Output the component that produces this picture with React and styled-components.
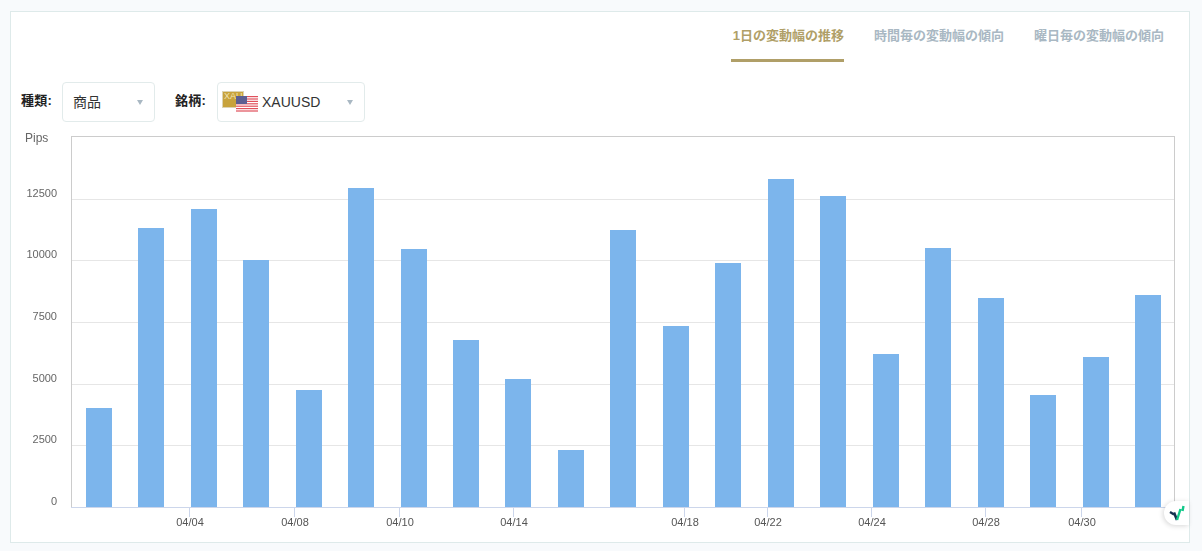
import React from "react";
import styled, { createGlobalStyle } from "styled-components";

const GlobalStyle = createGlobalStyle`
  html, body {
    margin: 0;
    padding: 0;
    background: #f8fafc;
  }
  body {
    font-family: "Liberation Sans", "Noto Sans CJK JP", sans-serif;
  }
`;

const Page = styled.div`
  width: 1202px;
  height: 551px;
  padding: 11px 0 0 10px;
  box-sizing: border-box;
  overflow: hidden;
`;

const Card = styled.div`
  position: relative;
  width: 1180px;
  height: 532px;
  box-sizing: border-box;
  background: #fff;
  border: 1px solid #deeaea;
`;

const Tabs = styled.div`
  display: flex;
  justify-content: flex-end;
  gap: 30px;
  padding-right: 25px;
  height: 50px;
`;

const Tab = styled.div`
  box-sizing: border-box;
  height: 50px;
  padding-top: 14px;
  padding-left: ${(p) => (p.$active ? 2 : 0)}px;
  font-size: 13px;
  line-height: 19px;
  font-weight: 700;
  white-space: nowrap;
  color: ${(p) => (p.$active ? "#b09f68" : "#a9b8c3")};
  border-bottom: 3px solid ${(p) => (p.$active ? "#b09f68" : "transparent")};
`;

const Filters = styled.div`
  display: flex;
  align-items: center;
  height: 40px;
  margin-top: 20px;
  padding-left: 10px;
`;

const FilterLabel = styled.span`
  width: ${(p) => p.$width}px;
  flex: none;
  margin-top: -5px;
  margin-left: ${(p) => p.$offset || 0}px;
  font-size: 13px;
  font-weight: 700;
  letter-spacing: 0.3px;
  color: #222;
  white-space: nowrap;
`;

const Select = styled.div`
  display: flex;
  align-items: center;
  box-sizing: border-box;
  width: ${(p) => p.$width}px;
  height: 40px;
  padding: 0 11px 0 ${(p) => p.$left}px;
  background: #fff;
  border: 1px solid #e2ebeb;
  border-radius: 4px;
  font-size: 14px;
  line-height: 20px;
  color: #333;
`;

const SelectText = styled.span`
  flex: 1;
  margin-top: -1px;
  white-space: nowrap;
`;

const Caret = styled.span`
  width: 0;
  height: 0;
  margin-top: 1px;
  border-left: 3.5px solid transparent;
  border-right: 3.5px solid transparent;
  border-top: 5px solid #a9b8c3;
`;

const PairIcon = styled.svg`
  flex: none;
  width: 36px;
  height: 22px;
  margin-right: 4px;
`;

const ChartSvg = styled.svg`
  display: block;
  width: 1178px;
  height: 414px;
  margin-top: 6px;
  will-change: transform;
`;

const AxisText = styled.text`
  font-family: "Liberation Sans", sans-serif;
  font-size: ${(p) => p.$size || 11}px;
  fill: ${(p) => p.$color || "#666"};
`;

const BrandBadge = styled.div`
  position: absolute;
  right: 0;
  bottom: 17px;
  width: 25px;
  height: 24px;
  background: #fff;
  border-radius: 12px 0 0 12px;
  box-shadow: -1px 1px 5px rgba(0, 0, 0, 0.16);
`;

const bars = [
  { x: 86, top: 408 },
  { x: 138, top: 228 },
  { x: 191, top: 209 },
  { x: 243, top: 260 },
  { x: 296, top: 390 },
  { x: 348, top: 188 },
  { x: 401, top: 249 },
  { x: 453, top: 340 },
  { x: 505, top: 379 },
  { x: 558, top: 450 },
  { x: 610, top: 230 },
  { x: 663, top: 326 },
  { x: 715, top: 263 },
  { x: 768, top: 179 },
  { x: 820, top: 196 },
  { x: 873, top: 354 },
  { x: 925, top: 248 },
  { x: 978, top: 298 },
  { x: 1030, top: 395 },
  { x: 1083, top: 357 },
  { x: 1135, top: 295 },
];

const yTicks = [
  { label: "12500", y: 199.5 },
  { label: "10000", y: 260.5 },
  { label: "7500", y: 322.5 },
  { label: "5000", y: 384.5 },
  { label: "2500", y: 445.5 },
];

const xTicks = [
  { label: "04/04", x: 189.5 },
  { label: "04/08", x: 294.5 },
  { label: "04/10", x: 399.5 },
  { label: "04/14", x: 513.5 },
  { label: "04/18", x: 684.5 },
  { label: "04/22", x: 767.5 },
  { label: "04/24", x: 871.5 },
  { label: "04/28", x: 985.5 },
  { label: "04/30", x: 1081.5 },
];

function XauUsdIcon() {
  const stripes = [0, 2, 4, 6, 8, 10, 12];
  return (
    <PairIcon viewBox="0 0 36 22">
      <rect x="0.5" y="0.5" width="21" height="16" fill="#c8a33c" stroke="#ddd4b4" />
      <text x="2" y="8" fontFamily="Liberation Sans" fontSize="9" fill="#f0e2b4">
        XAU
      </text>
      <rect x="14" y="5" width="22" height="15.6" fill="#fff" />
      {stripes.map((s) => (
        <rect key={s} x="14" y={5 + s * 1.2} width="22" height="1.2" fill="#e0505c" />
      ))}
      <rect x="14" y="5" width="11" height="8" fill="#5c5f92" />
    </PairIcon>
  );
}

function BrandMark() {
  return (
    <svg width="25" height="24" viewBox="0 0 25 24">
      <path d="M6 11 L10 13.5" stroke="#14304f" strokeWidth="2.4" fill="none" />
      <path d="M10 11.5 L13 19" stroke="#14304f" strokeWidth="2.6" fill="none" />
      <path d="M13 19 L16.5 8 M19.5 5 L18.5 10" stroke="#12c98a" strokeWidth="2.4" fill="none" />
    </svg>
  );
}

function App() {
  return (
    <>
      <GlobalStyle />
      <Page>
        <Card>
          <Tabs>
            <Tab $active>1日の変動幅の推移</Tab>
            <Tab>時間毎の変動幅の傾向</Tab>
            <Tab>曜日毎の変動幅の傾向</Tab>
          </Tabs>
          <Filters>
            <FilterLabel $width={41}>種類:</FilterLabel>
            <Select $width={93} $left={10}>
              <SelectText>商品</SelectText>
              <Caret />
            </Select>
            <FilterLabel $width={42} $offset={20}>銘柄:</FilterLabel>
            <Select $width={148} $left={4}>
              <XauUsdIcon />
              <SelectText>XAUUSD</SelectText>
              <Caret />
            </Select>
          </Filters>
          <ChartSvg viewBox="11 128 1178 414">
            <rect x="71.5" y="136.5" width="1103" height="371" fill="#fff" stroke="#ccc" />
            {yTicks.map((t) => (
              <line key={t.label} x1="72" x2="1174" y1={t.y} y2={t.y} stroke="#e6e6e6" />
            ))}
            {bars.map((b) => (
              <rect key={b.x} x={b.x} y={b.top} width="26" height={507 - b.top} fill="#7cb5ec" />
            ))}
            <line x1="71" x2="1175" y1="507.5" y2="507.5" stroke="#ccd6eb" />
            {xTicks.map((t) => (
              <g key={t.label}>
                <line x1={t.x} x2={t.x} y1="507" y2="517" stroke="#ccd6eb" />
                <AxisText x={t.x + 0.5} y="526" textAnchor="middle" $color="#555">
                  {t.label}
                </AxisText>
              </g>
            ))}
            <AxisText x="25" y="142" $size={12}>
              Pips
            </AxisText>
            {yTicks.map((t) => (
              <AxisText key={t.label} x="57" y={t.y - 2.5} textAnchor="end">
                {t.label}
              </AxisText>
            ))}
            <AxisText x="57" y="505" textAnchor="end">
              0
            </AxisText>
          </ChartSvg>
          <BrandBadge>
            <BrandMark />
          </BrandBadge>
        </Card>
      </Page>
    </>
  );
}

export default App;
